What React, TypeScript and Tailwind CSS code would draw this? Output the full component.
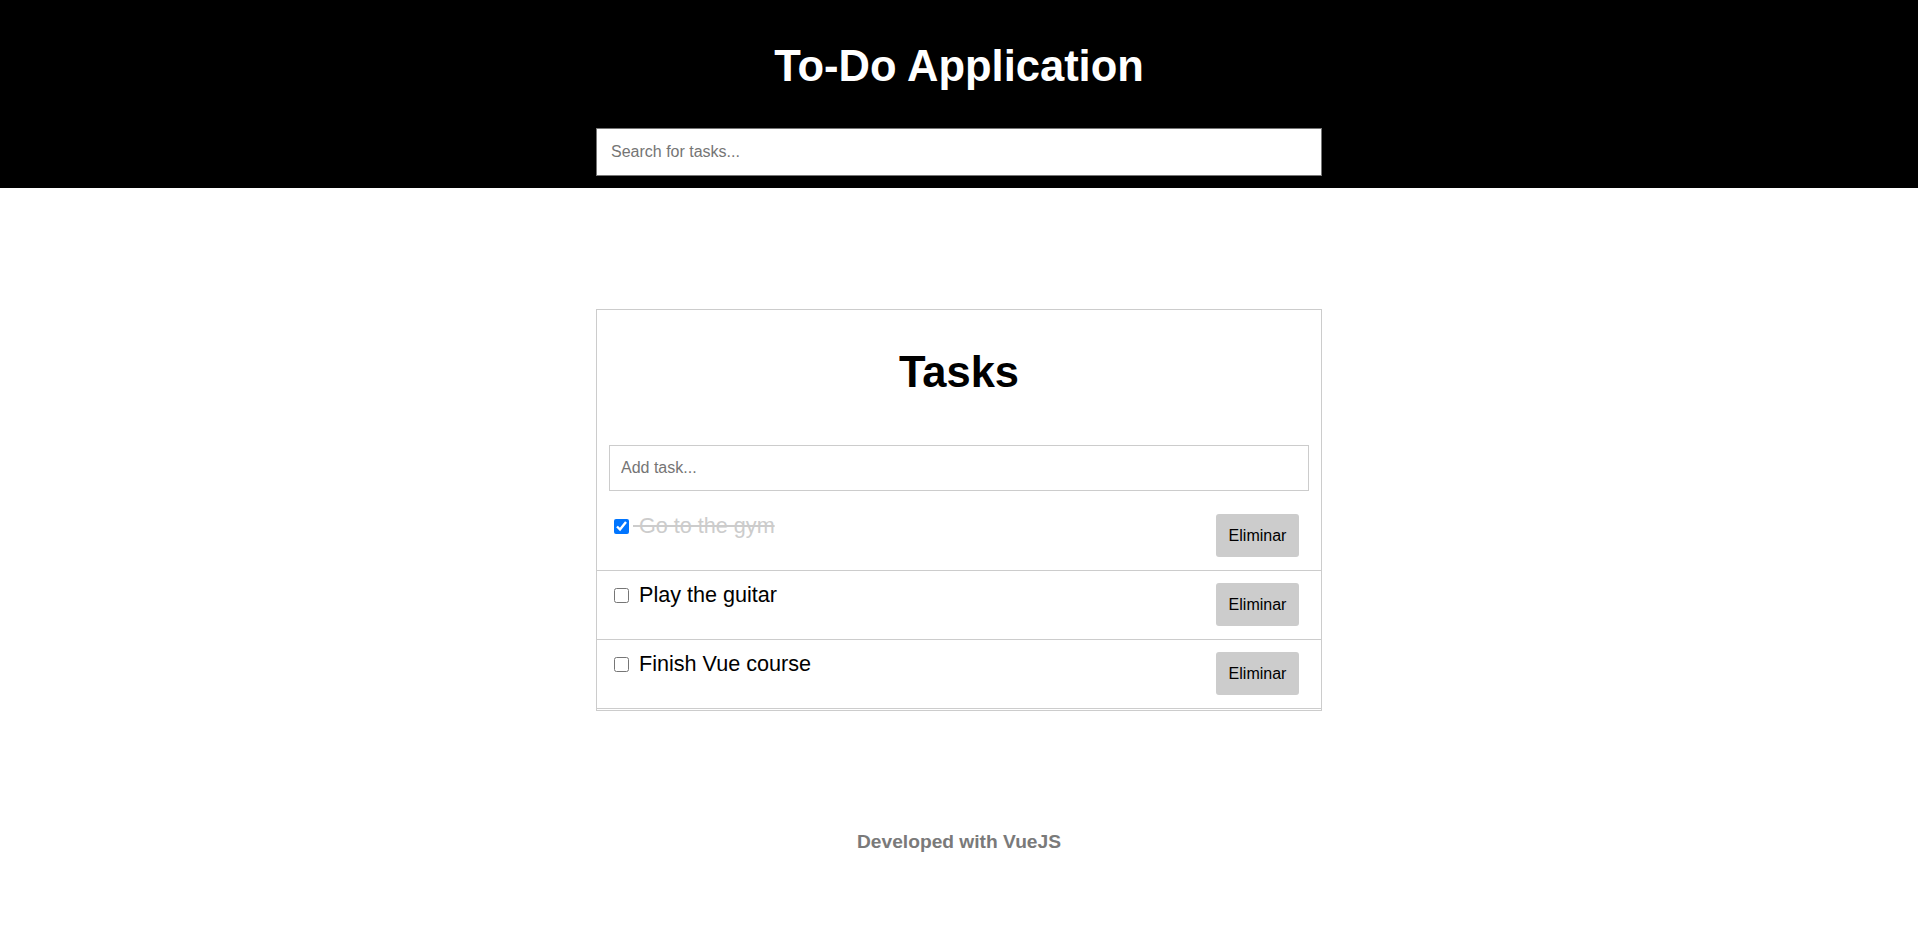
import { useState } from 'react'

const initialTasks = [
  { id: 1, title: 'Go to the gym', done: true },
  { id: 2, title: 'Play the guitar', done: false },
  { id: 3, title: 'Finish Vue course', done: false },
]

export default function App() {
  const [tasks, setTasks] = useState(initialTasks)

  const toggle = (id: number) =>
    setTasks((list) => list.map((t) => (t.id === id ? { ...t, done: !t.done } : t)))

  const remove = (id: number) => setTasks((list) => list.filter((t) => t.id !== id))

  return (
    <div className="min-h-screen bg-white font-['Liberation_Sans',Arial,sans-serif] text-black">
      <header className="flex flex-col items-center bg-black pt-[42px] pb-[12px]">
        <h1 className="mb-[38px] text-[43.5px] leading-[48px] font-bold text-white">To-Do Application</h1>
        <input
          type="text"
          placeholder="Search for tasks..."
          className="h-[48px] w-[726px] border border-[#767676] bg-white px-[14px] text-[16px] text-black outline-none placeholder:text-[#757575]"
        />
      </header>

      <main className="flex flex-col items-center pt-[121px]">
        <section className="w-[726px] border border-[#cccccc] pt-[38px] pb-[1px]">
          <h2 className="text-center text-[43.5px] leading-[48px] font-bold">Tasks</h2>

          <div className="mx-[12px] mt-[49px] mb-[11px]">
            <input
              type="text"
              placeholder="Add task..."
              className="h-[46px] w-full border border-[#cccccc] px-[11px] text-[16px] outline-none placeholder:text-[#757575]"
            />
          </div>

          <ul>
            {tasks.map((task) => (
              <li
                key={task.id}
                className="flex items-start justify-between border-b border-[#cccccc] pt-[12px] pr-[22px] pb-[13px] pl-[17px]"
              >
                <label className="flex items-start">
                  <input
                    type="checkbox"
                    checked={task.done}
                    onChange={() => toggle(task.id)}
                    className="mt-[5px] mr-[4px] h-[15px] w-[15px]"
                  />
                  <span
                    className={
                      task.done
                        ? 'text-[21.6px] leading-[23px] whitespace-pre text-[#cccccc] line-through'
                        : 'text-[21.6px] leading-[23px] whitespace-pre'
                    }
                  >
                    {' ' + task.title}
                  </span>
                </label>
                <button
                  onClick={() => remove(task.id)}
                  className="h-[43px] w-[83px] rounded-[3px] bg-[#cccccc] text-[16px] text-black"
                >
                  Eliminar
                </button>
              </li>
            ))}
          </ul>
        </section>

        <p className="mt-[117px] text-[19.2px] font-bold text-[#7a7a7a]">Developed with VueJS</p>
      </main>
    </div>
  )
}
